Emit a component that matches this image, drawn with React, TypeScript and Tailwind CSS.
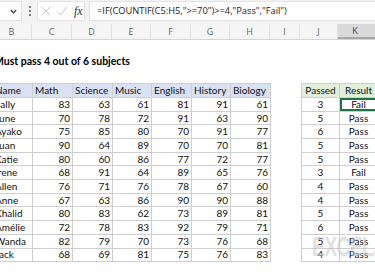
import React from "react";

const rows: [string, number, number, number, number, number, number, number, string][] = [
  ["Sally", 83, 63, 61, 81, 91, 61, 3, "Fail"],
  ["June", 70, 78, 72, 91, 63, 90, 5, "Pass"],
  ["Ayako", 75, 85, 80, 70, 91, 77, 6, "Pass"],
  ["Juan", 90, 64, 89, 70, 70, 81, 5, "Pass"],
  ["Katie", 80, 60, 86, 77, 72, 77, 5, "Pass"],
  ["Irene", 68, 91, 64, 89, 65, 76, 3, "Fail"],
  ["Allen", 76, 71, 76, 78, 67, 60, 4, "Pass"],
  ["Anne", 67, 63, 86, 90, 90, 88, 4, "Pass"],
  ["Khalid", 80, 83, 62, 73, 89, 81, 5, "Pass"],
  ["Amélie", 72, 78, 83, 92, 79, 71, 6, "Pass"],
  ["Wanda", 82, 79, 70, 73, 76, 68, 5, "Pass"],
  ["Jack", 68, 69, 81, 75, 76, 83, 4, "Pass"],
];

const subjects = ["Math", "Science", "Music", "English", "History", "Biology"];

const colLetters: [string, string][] = [
  ["B", "w-[40px]"],
  ["C", "w-[40px]"],
  ["D", "w-[40px]"],
  ["E", "w-[39px]"],
  ["F", "w-[40px]"],
  ["G", "w-[39px]"],
  ["H", "w-[40px]"],
  ["I", "w-[30px]"],
  ["J", "w-[38px]"],
];

export default function App() {
  return (
    <div
      className="w-[375px] h-[275px] overflow-hidden bg-white relative"
      style={{ fontFamily: "Lato, 'Noto Sans', sans-serif" }}
    >
      {/* top bar */}
      <div className="h-[24px] bg-[#f3f3f3] flex items-start pt-[1px]">
        <div className="h-[20px] w-[22px] bg-white border-r border-y border-[#e3e3e3] flex items-center justify-end pr-[4px]">
          <svg width="7" height="5" viewBox="0 0 7 5">
            <path d="M0.8 1 L3.5 3.8 L6.2 1" fill="none" stroke="#333" strokeWidth="1.2" />
          </svg>
        </div>
        <div className="w-[15px] h-[20px] flex flex-col items-center justify-center gap-[2px]">
          <div className="w-[2px] h-[2px] bg-[#555] rounded-full" />
          <div className="w-[2px] h-[2px] bg-[#555] rounded-full" />
          <div className="w-[2px] h-[2px] bg-[#555] rounded-full" />
        </div>
        <div className="h-[20px] w-[48px] bg-white border border-[#e3e3e3] rounded-[2px] flex items-center">
          <svg width="10" height="10" viewBox="0 0 10 10" className="ml-[3px]">
            <path d="M1 1 L9 9 M9 1 L1 9" stroke="#c4c4c4" strokeWidth="1" fill="none" />
          </svg>
          <svg width="12" height="10" viewBox="0 0 12 10" className="ml-[5px]">
            <path d="M1 5.5 L4.5 9 L11 1" stroke="#c4c4c4" strokeWidth="1" fill="none" />
          </svg>
          <span
            className="ml-[6px] text-[12px] italic text-[#333] leading-none"
            style={{ fontFamily: "'Liberation Serif', serif" }}
          >
            fx
          </span>
        </div>
        <div
          className="ml-[4px] flex-1 h-[20px] bg-white border-l border-y border-[#e3e3e3] flex items-center pl-[7px] text-[9.3px] text-[#222] whitespace-nowrap"
          style={{ fontFamily: "'Open Sans', 'Noto Sans', sans-serif" }}
        >
          =IF(COUNTIF(C5:H5,"&gt;=70")&gt;=4,"Pass","Fail")
        </div>
      </div>

      {/* column headers */}
      <div
        className="h-[16px] bg-[#f5f5f5] border-b border-[#d4d4d4] flex ml-[-8px] text-[9px] text-[#666]"
        style={{ fontFamily: "'Open Sans', 'Noto Sans', sans-serif" }}
      >
        {colLetters.map(([l, w]) => (
          <div key={l} className={`${w} shrink-0 flex items-center justify-center border-r border-[#e2e2e2]`}>
            {l}
          </div>
        ))}
        <div className="flex-1 flex items-center justify-center bg-[#dadada] border-b-[2px] border-[#a8a8a8] text-[#444] pr-[3px]">
          K
        </div>
      </div>

      {/* title */}
      <div className="ml-[-6px] mt-[15px] h-[14px] flex items-center text-[10.5px] font-bold text-black whitespace-nowrap">
        Must pass 4 out of 6 subjects
      </div>

      {/* tables */}
      <div className="ml-[-8px] mt-[14.3px] flex items-start text-[10px] text-[#111]">
        <div className="grid grid-cols-[40px_40px_40px_39px_40px_39px_40px] auto-rows-[13.7px] border-t border-l border-[#cfcfcf]">
          <div className="bg-[#d9e1f2] border-r border-b border-[#cfcfcf] pl-[2px] flex items-center">Name</div>
          {subjects.map((s) => (
            <div key={s} className="bg-[#d9e1f2] border-r border-b border-[#cfcfcf] pl-[2px] flex items-center">
              {s}
            </div>
          ))}
          {rows.map((r) => (
            <React.Fragment key={r[0]}>
              <div className="border-r border-b border-[#cfcfcf] pl-[2px] flex items-center whitespace-nowrap">{r[0]}</div>
              {[r[1], r[2], r[3], r[4], r[5], r[6]].map((v, i) => (
                <div key={i} className="border-r border-b border-[#cfcfcf] pr-[2px] flex items-center justify-end">
                  {v}
                </div>
              ))}
            </React.Fragment>
          ))}
        </div>
        <div className="ml-[30px] grid grid-cols-[38px_44px] auto-rows-[13.7px] border-t border-l border-[#cfcfcf]">
          <div className="bg-[#e2efda] border-r border-b border-[#cfcfcf] flex items-center justify-center">Passed</div>
          <div className="bg-[#e2efda] border-r border-b border-[#cfcfcf] flex items-center justify-center pr-[6px]">Result</div>
          {rows.map((r, idx) => (
            <React.Fragment key={r[0]}>
              <div className="border-r border-b border-[#cfcfcf] flex items-center justify-center">{r[7]}</div>
              <div
                className={`border-r border-b border-[#cfcfcf] flex items-center justify-center pr-[6px] ${
                  idx === 0 ? "shadow-[inset_0_0_0_2px_#217346]" : ""
                }`}
              >
                {r[8]}
              </div>
            </React.Fragment>
          ))}
        </div>
      </div>

      {/* watermark */}
      <div
        className="absolute left-[312px] top-[234px] origin-left scale-x-[0.72] text-[27px] font-bold text-[#c4c4c4] opacity-50 tracking-[-1px] leading-none whitespace-nowrap pointer-events-none"
        style={{ fontFamily: "'Liberation Sans', sans-serif" }}
      >
        EXCELJET
      </div>
    </div>
  );
}
